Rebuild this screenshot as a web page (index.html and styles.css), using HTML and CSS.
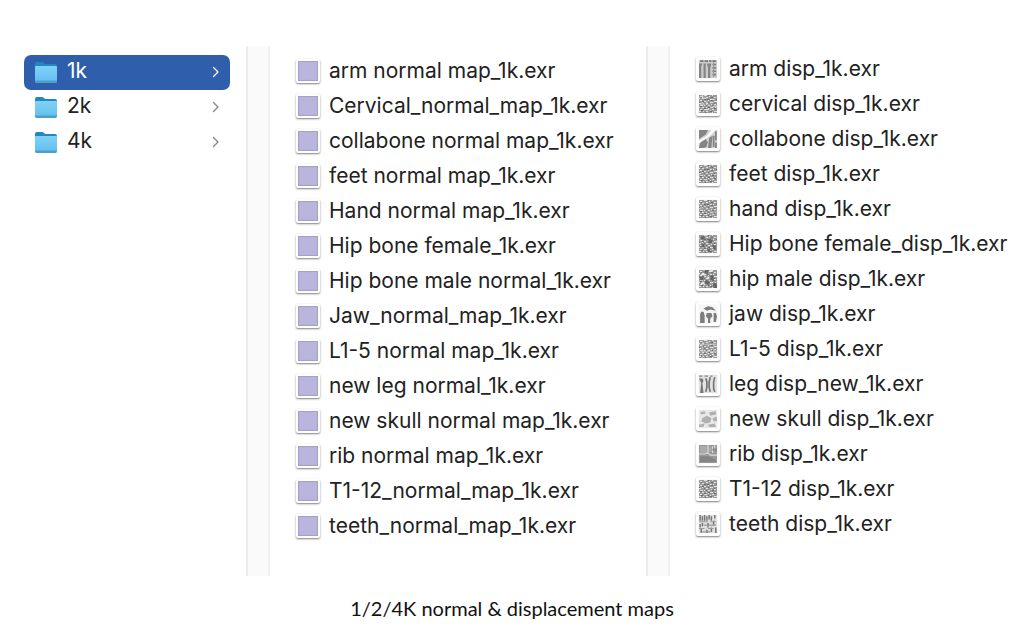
FILE: index.html
```html
<!DOCTYPE html>
<html lang="en">
<head>
  <meta charset="UTF-8">
  <meta name="viewport" content="width=device-width, initial-scale=1.0">
  <title>1/2/4K normal &amp; displacement maps</title>
  <link rel="stylesheet" href="styles.css">
</head>
<body>
  <!-- Shared icons -->
  <svg class="sprites" width="0" height="0" aria-hidden="true">
    <defs>
      <linearGradient id="folder-front" x1="0" y1="0" x2="0" y2="1">
        <stop offset="0" stop-color="#7fd2f8"/>
        <stop offset="1" stop-color="#62bdec"/>
      </linearGradient>
    </defs>
    <symbol id="folder" viewBox="0 0 24 24">
      <path d="M1 4Q1 2 3 2H8Q9 2 10 3L11 4H21Q23 4 23 6V12H1Z" fill="#2386bd"/>
      <path d="M1 7Q1 6 2 6H22Q23 6 23 7V21Q23 23 21 23H3Q1 23 1 21Z" fill="url(#folder-front)"/>
      <path d="M1 20.500H23V21Q23 23 21 23H3Q1 23 1 21Z" fill="#4b9fca"/>
    </symbol>
    <symbol id="chevron" viewBox="0 0 12 12">
      <path d="M3.500 1.500L8 6L3.500 10.500" fill="none" stroke="currentColor" stroke-width="1.300" stroke-linecap="round" stroke-linejoin="round"/>
    </symbol>
    <!-- Packed map texture used by several thumbnails -->
    <symbol id="noise" viewBox="0 0 18 18">
      <path d="M0 0H18V18H0Z" fill="#9a9a9a"/>
      <path d="M1 1.500H3M5 .5H8M10 1.500H11M13 .5H14M15 2.500H17M0 3.500H1M3 3.500H5M7 2.500H9M11 4.500H13M14 4.500H15M1 5.500H3M5 6.500H7M9 5.500H10M15 6.500H18M0 8.500H2M3 7.500H4M7 8.500H9M11 7.500H14M1 10.500H4M5 10.500H6M9 10.500H11M12 9.500H13M15 9.500H17M0 12.500H1M3 12.500H5M7 12.500H8M11 12.500H14M16 12.500H17M1 14.500H3M5 14.500H8M9 13.500H10M13 14.500H15M0 16.500H2M4 16.500H5M7 16.500H9M11 15.500H12M13 17.500H14M15 16.500H18" stroke="#e0e0e0"/>
      <path d="M2 2.500H3M9 .5H10M12 2.500H14M5 4.500H7M8 4.500H10M17 4.500H18M3 6.500H5M12 5.500H14M0 7.500H1M5 8.500H6M9 7.500H10M15 8.500H16M7 10.500H8M13 10.500H15M1 11.500H3M9 12.500H11M5 13.500H7M15 13.500H17M2 15.500H4M11 16.500H13M9 15.500H10M6 17.500H7" stroke="#6c6c6c"/>
    </symbol>
  </svg>

  <main class="browser">
    <nav class="column folders">
      <ul>
        <li><a class="row selected" href="#1k"><svg class="icon"><use href="#folder"/></svg><span class="name">1k</span><svg class="chevron"><use href="#chevron"/></svg></a></li>
        <li><a class="row" href="#2k"><svg class="icon"><use href="#folder"/></svg><span class="name">2k</span><svg class="chevron"><use href="#chevron"/></svg></a></li>
        <li><a class="row" href="#4k"><svg class="icon"><use href="#folder"/></svg><span class="name">4k</span><svg class="chevron"><use href="#chevron"/></svg></a></li>
      </ul>
    </nav>

    <div class="gutter"></div>

    <section class="column normal-maps">
      <ul>
        <li class="row"><span class="thumb"></span><span class="name">arm normal map_1k.exr</span></li>
        <li class="row"><span class="thumb"></span><span class="name">Cervical_normal_map_1k.exr</span></li>
        <li class="row"><span class="thumb"></span><span class="name">collabone normal map_1k.exr</span></li>
        <li class="row"><span class="thumb"></span><span class="name">feet normal map_1k.exr</span></li>
        <li class="row"><span class="thumb"></span><span class="name">Hand normal map_1k.exr</span></li>
        <li class="row"><span class="thumb"></span><span class="name">Hip bone female_1k.exr</span></li>
        <li class="row"><span class="thumb"></span><span class="name">Hip bone male normal_1k.exr</span></li>
        <li class="row"><span class="thumb"></span><span class="name">Jaw_normal_map_1k.exr</span></li>
        <li class="row"><span class="thumb"></span><span class="name">L1-5 normal map_1k.exr</span></li>
        <li class="row"><span class="thumb"></span><span class="name">new leg normal_1k.exr</span></li>
        <li class="row"><span class="thumb"></span><span class="name">new skull normal map_1k.exr</span></li>
        <li class="row"><span class="thumb"></span><span class="name">rib normal map_1k.exr</span></li>
        <li class="row"><span class="thumb"></span><span class="name">T1-12_normal_map_1k.exr</span></li>
        <li class="row"><span class="thumb"></span><span class="name">teeth_normal_map_1k.exr</span></li>
      </ul>
    </section>

    <div class="gutter"></div>

    <section class="column disp-maps">
      <ul>
        <li class="row">
          <svg class="thumb" viewBox="0 0 16 16"><path d="M0 0H16V16H0Z" fill="#ccc"/><path d="M1 1H4M5 1H8M9 1H11M12 1H15M12 4H15M12 7H15M12 10H15M12 13H15" stroke="#777" stroke-width="1.500"/><path d="M0 3H3L2 6V16H0ZM4 3H6V16H4ZM7 3H11L10 7V16H8V7Z" fill="#858585"/><path d="M13 2V15" stroke="#999"/></svg>
          <span class="name">arm disp_1k.exr</span>
        </li>
        <li class="row">
          <svg class="thumb" viewBox="0 0 16 16"><use href="#noise"/><path d="M3 0V3H6M10 4H14M1 8H5M7 6V9M12 10H16M6 13H9" stroke="#ddd" fill="none"/></svg>
          <span class="name">cervical disp_1k.exr</span>
        </li>
        <li class="row">
          <svg class="thumb" viewBox="0 0 16 16"><path d="M0 0H16V16H0Z" fill="#d2d2d2"/><path d="M0 0H8L6 4L0 8ZM0 16L1 11L6 8L8 11L5 16ZM9 7L12 5L11 16H8Z" fill="#858585"/><path d="M0 9L7 5L11 0H15L10 5L4 9L0 12Z" fill="#fafafa"/><path d="M13 5V15M15 1V9M15 11V16M6 12V15" stroke="#808080" stroke-width="1.500"/></svg>
          <span class="name">collabone disp_1k.exr</span>
        </li>
        <li class="row">
          <svg class="thumb" viewBox="0 0 16 16"><use href="#noise"/></svg>
          <span class="name">feet disp_1k.exr</span>
        </li>
        <li class="row">
          <svg class="thumb" viewBox="0 0 16 16"><use href="#noise"/><path d="M0 5H7V9H0ZM9 9H16V13H9Z" fill="#aaa" opacity=".4"/></svg>
          <span class="name">hand disp_1k.exr</span>
        </li>
        <li class="row">
          <svg class="thumb" viewBox="0 0 16 16"><use href="#noise"/><path d="M1 1H5V4H2ZM8 4L11 3L12 7H9ZM2 8H5V11H3ZM12 10L15 9V13H13ZM7 12H10V15H8Z" fill="#666"/></svg>
          <span class="name">Hip bone female_disp_1k.exr</span>
        </li>
        <li class="row">
          <svg class="thumb" viewBox="0 0 16 16"><use href="#noise"/><path d="M5 0H8V3H5ZM0 6H4V9H1ZM10 5H13V9H10ZM5 10L9 9V13H6ZM12 12H16V16H13Z" fill="#666"/><path d="M9 1H12M2 4H6M2 12H5M7 7H9" stroke="#eee" stroke-width="1.500"/></svg>
          <span class="name">hip male disp_1k.exr</span>
        </li>
        <li class="row">
          <svg class="thumb" viewBox="0 0 16 16"><path d="M0 0H16V16H0Z" fill="#f5f5f5"/><path d="M4 3L8 1L12 2L15 5L10 4L7 5ZM1 8L2 6H4L5 9V16H1ZM7 7H11L12 10L10 12V16H8V12L6 10ZM13 7H15L16 10L15 15H13Z" fill="#7c7c7c"/></svg>
          <span class="name">jaw disp_1k.exr</span>
        </li>
        <li class="row">
          <svg class="thumb" viewBox="0 0 16 16"><use href="#noise"/><path d="M3 0V16M8 0V16M13 0V16M0 4H16M0 10H16" stroke="#ccc" stroke-width="0.600"/></svg>
          <span class="name">L1-5 disp_1k.exr</span>
        </li>
        <li class="row">
          <svg class="thumb" viewBox="0 0 16 16"><path d="M0 0H16V16H0Z" fill="#e2e2e2"/><path d="M0 1H3M5 1H8M10 1H12" stroke="#888"/><path d="M0 3H3L4 5L3 7L4 16H1L2 7Z" fill="#777"/><path d="M6 3L7 6V11L6 15M10 2L9 6V11L10 15M14 2L13 6V12L14 15" fill="none" stroke="#777" stroke-width="1.500"/></svg>
          <span class="name">leg disp_new_1k.exr</span>
        </li>
        <li class="row">
          <svg class="thumb" viewBox="0 0 16 16"><path d="M0 0H16V16H0Z" fill="#e8e8e8"/><path d="M1 2L5 1L6 3L2 4ZM9 2L15 1V4L10 5ZM3 7L7 5L11 7L10 11L6 12L2 10ZM12 7L16 6V10H13ZM0 13L5 12L4 15H0ZM8 13L14 12L15 15H9Z" fill="#b0b0b0"/></svg>
          <span class="name">new skull disp_1k.exr</span>
        </li>
        <li class="row">
          <svg class="thumb" viewBox="0 0 16 16"><path d="M0 0H16V16H0Z" fill="#999"/><path d="M1 1H7V7H1ZM8 2H11V6H8Z" fill="#aaa"/><path d="M0 8H5L8 7L10 9H16M8 0V7M12 1V7M14 0V5" stroke="#ddd" fill="none"/><path d="M1 10H9L15 13V15H1ZM12 3H16V5H12Z" fill="#858585"/></svg>
          <span class="name">rib disp_1k.exr</span>
        </li>
        <li class="row">
          <svg class="thumb" viewBox="0 0 16 16"><use href="#noise"/></svg>
          <span class="name">T1-12 disp_1k.exr</span>
        </li>
        <li class="row">
          <svg class="thumb" viewBox="0 0 16 16"><path d="M0 0H16V16H0Z" fill="#e0e0e0"/><path d="M1 0V5M3 1V5M5 0V5M7 1V5M9 0V4M11 1V5M14 0V3M1 8V11M3 7V10M8 7V11M13 5V9M2 12V16M7 13V16M11 11V15M15 11V16" stroke="#777" stroke-width="1.300"/><path d="M0 6H8M10 6H15M4 9H7M9 9H15M0 12H5M8 12H13M3 15H10" stroke="#999"/></svg>
          <span class="name">teeth disp_1k.exr</span>
        </li>
      </ul>
    </section>
  </main>

  <footer>
    <p>1/2/4K normal &amp; displacement maps</p>
  </footer>
</body>
</html>
```
FILE: styles.css
```css
/* General Layout */
* {
  box-sizing: border-box;
}

body {
  font-family: Inter, "Liberation Sans", sans-serif;
  margin: 0;
  padding: 46px 0 0;
  background-color: #fff;
  color: #222;
}

.sprites {
  position: absolute;
}

ul {
  list-style: none;
  margin: 0;
  padding: 0;
}

/* Column browser */
.browser {
  display: grid;
  grid-template-columns: 246fr 24px 376fr 24px 354fr;
}

.column {
  min-width: 0;
  padding-bottom: 32px;
}

.gutter {
  background-color: #fafafa;
  border-left: 2px solid #ececec;
  border-right: 2px solid #f1f1f1;
}

.folders {
  padding: 9px 16px 32px 24px;
}

.normal-maps {
  padding-top: 8px;
  padding-left: 26px;
}

.disp-maps {
  padding-top: 6px;
  padding-left: 26px;
}

/* Rows */
.row {
  display: flex;
  align-items: center;
  height: 35px;
  gap: 9px;
  font-size: 21px;
  line-height: 32px;
  color: #222;
  text-decoration: none;
  white-space: nowrap;
}

.name {
  padding-bottom: 1px;
}

.folders .row {
  padding: 0 8px 0 10px;
}

.folders .name {
  flex: 1;
  padding-bottom: 3px;
}

.folders .selected {
  background-color: #2f5fac;
  border-radius: 7px;
  color: #fff;
}

.icon {
  width: 24px;
  height: 24px;
  margin-bottom: 2px;
}

.chevron {
  width: 12px;
  height: 12px;
  margin-bottom: 2px;
  color: #858585;
}

.selected .chevron {
  color: #fff;
}

/* File thumbnails */
.thumb {
  flex: none;
  width: 24px;
  height: 24px;
  margin-bottom: 2px;
  padding: 1px;
  background-color: #b9b5dc;
  border: 2px solid #fff;
  border-radius: 2px;
  box-shadow: 0 1px 2px rgba(0, 0, 0, 0.5), inset 0 0 1px 1px #a39fc6;
}

.disp-maps .thumb {
  background-color: #fafafa;
  box-shadow: 0 1px 2px rgba(0, 0, 0, 0.5);
}

/* Caption */
footer {
  text-align: center;
  font-family: Lato, sans-serif;
  font-size: 20px;
  line-height: 24px;
  color: #111;
}

footer p {
  margin: 20px 0 0;
}
```
